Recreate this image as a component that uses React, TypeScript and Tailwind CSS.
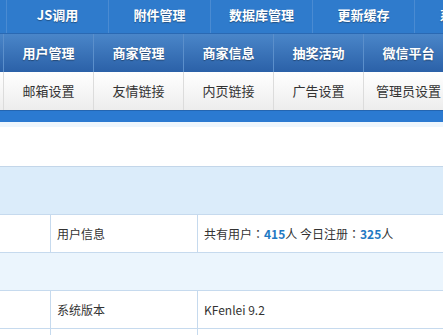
import React from "react";

const topTabs = ["JS调用", "附件管理", "数据库管理", "更新缓存", "系统设置"];
const midTabs = ["用户管理", "商家管理", "商家信息", "抽奖活动", "微信平台"];
const subTabs = ["邮箱设置", "友情链接", "内页链接", "广告设置", "管理员设置"];

const Colon = () => <span className="font-['Noto_Sans_CJK_TC',sans-serif]">：</span>;

export default function App() {
  return (
    <div className="w-[443px] h-[335px] overflow-hidden bg-white text-[13px] text-[#333] font-['Microsoft_YaHei','Noto_Sans_CJK_SC',sans-serif]">
      {/* top menu */}
      <div className="flex h-[34px] pl-[6px] bg-[#2f7bcc] border-b border-[#2a69b3]">
        {topTabs.map((t) => (
          <div
            key={t}
            className="flex w-[102px] shrink-0 items-center justify-center border-l border-[#4a8bd2] pb-[3px] font-bold text-white [text-shadow:0_1px_1px_rgba(0,0,0,0.35)]"
          >
            {t}
          </div>
        ))}
      </div>

      {/* main menu */}
      <div className="flex h-[38px] pl-[3px] bg-gradient-to-b from-[#4a86c9] to-[#2b61a8]">
        {midTabs.map((t) => (
          <div
            key={t}
            className="flex w-[90px] shrink-0 items-center justify-center border-l border-[#5b8fcb] font-bold text-white [text-shadow:0_1px_1px_rgba(0,0,0,0.35)]"
          >
            {t}
          </div>
        ))}
      </div>

      {/* sub menu */}
      <div className="flex h-[38px] pl-[3px] bg-gradient-to-b from-white to-[#ededed]">
        {subTabs.map((t) => (
          <div
            key={t}
            className="flex w-[90px] shrink-0 items-center justify-center border-l border-[#dcdcdc] pb-[1px] text-[#333]"
          >
            {t}
          </div>
        ))}
      </div>

      <div className="h-[12px] bg-[#2b7ad1] border-t border-[#2465b0]" />
      <div className="h-[5px] bg-[#eef6fd]" />
      <div className="h-[39px] bg-white" />
      <div className="h-[48px] bg-[#dbecfa] border-t border-[#c3d6e9]" />

      {/* info table */}
      <div className="border-t border-[#c6daee] text-[12px]">
        <div className="flex h-[38px] border-b border-[#c6daee] bg-white">
          <div className="w-[51px] shrink-0 border-r border-[#c6daee]" />
          <div className="flex w-[147px] shrink-0 items-center border-r border-[#c6daee] pl-[6px]">用户信息</div>
          <div className="flex items-center pl-[6px] whitespace-nowrap">
            共有用户<Colon /><b className="text-[#1f79c3]">415</b>人 今日注册<Colon /><b className="text-[#1f79c3]">325</b>人
          </div>
        </div>
        <div className="h-[38px] border-b border-[#c6daee] bg-[#ebf5fd]" />
        <div className="flex h-[38px] border-b border-[#c6daee] bg-white">
          <div className="w-[51px] shrink-0 border-r border-[#c6daee]" />
          <div className="flex w-[147px] shrink-0 items-center border-r border-[#c6daee] pl-[6px]">系统版本</div>
          <div className="flex items-center pl-[6px]">KFenlei 9.2</div>
        </div>
        <div className="flex h-[38px] bg-white">
          <div className="w-[51px] shrink-0 border-r border-[#c6daee]" />
          <div className="w-[147px] shrink-0 border-r border-[#c6daee]" />
        </div>
      </div>
    </div>
  );
}
